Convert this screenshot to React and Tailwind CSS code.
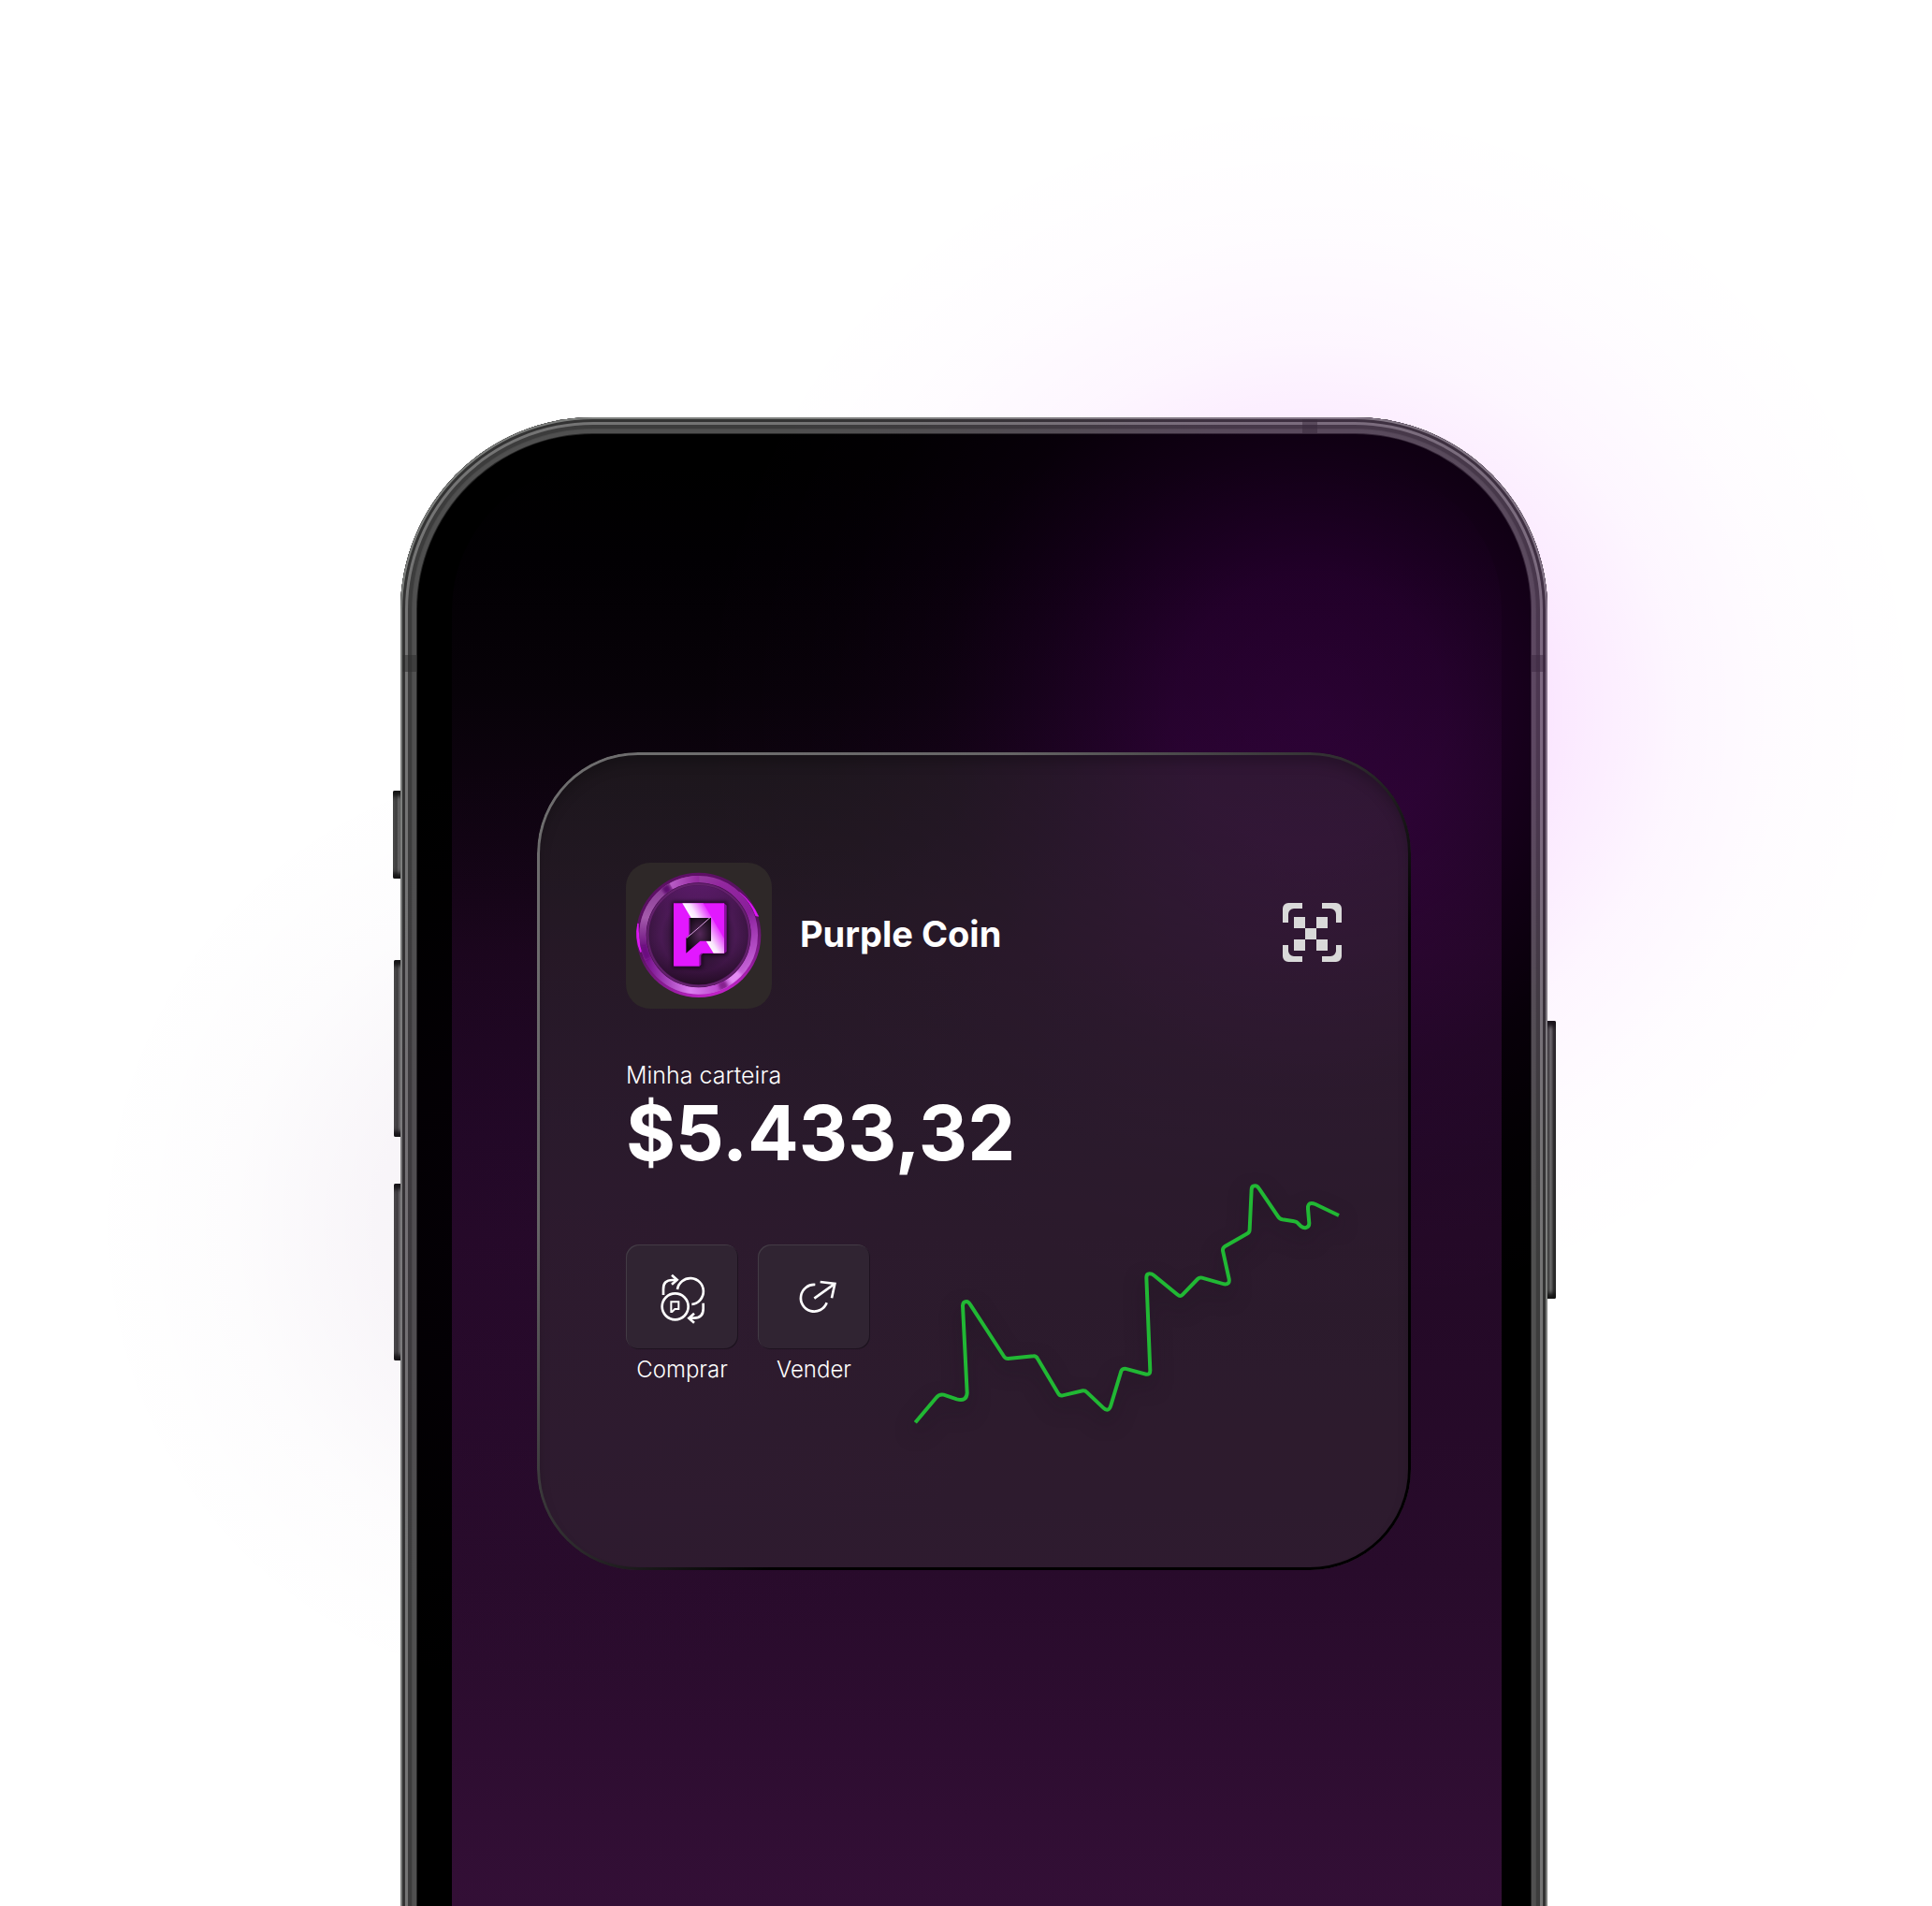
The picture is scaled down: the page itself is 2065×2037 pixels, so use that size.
import React from "react";

const FRAME_RINGS =
  "shadow-[inset_0_0_0_2px_#7d7f7d,inset_0_0_0_5px_#333333,inset_0_0_0_8px_#747474,inset_0_0_0_12px_#3c3c3c,inset_0_0_0_13px_#4a4a4a,inset_0_0_0_17px_#505050,inset_0_0_0_18px_#262626]";

function SideButton({ className }) {
  return (
    <div
      className={`absolute rounded-xs bg-[linear-gradient(90deg,#5a5a5a,#3c3c3c_30%,#6a6a6a_55%,#2e2e2e_80%)] shadow-[inset_0_8px_4px_-2px_#161616,inset_0_-8px_4px_-2px_#161616] ${className}`}
    />
  );
}

function CoinLogo() {
  return (
    <svg viewBox="27 33 468 468" className="size-39 shrink-0 rounded-[26px] bg-[#2e2828]" role="img" aria-label="Purple Coin">
      <defs>
        <linearGradient id="rim" x1="0.35" y1="0" x2="0.65" y2="1">
          <stop offset="0" stopColor="#5e0f66" />
          <stop offset="0.5" stopColor="#55125c" />
          <stop offset="0.8" stopColor="#8a1b94" />
          <stop offset="1" stopColor="#c822cf" />
        </linearGradient>
        <linearGradient id="ring" x1="0.2" y1="0" x2="0.8" y2="1">
          <stop offset="0" stopColor="#9650a0" />
          <stop offset="0.25" stopColor="#93289f" />
          <stop offset="0.55" stopColor="#8a1f9b" />
          <stop offset="0.8" stopColor="#b24cc4" />
          <stop offset="1" stopColor="#d274e4" />
        </linearGradient>
        <linearGradient id="leftSheen" x1="0" y1="0" x2="0" y2="1">
          <stop offset="0" stopColor="#8a3c96" />
          <stop offset="0.5" stopColor="#a35aab" />
          <stop offset="1" stopColor="#6c0f80" />
        </linearGradient>
        <linearGradient id="lowSheen" x1="0" y1="0" x2="1" y2="0">
          <stop offset="0" stopColor="#7a1590" />
          <stop offset="0.55" stopColor="#dc7df0" />
          <stop offset="1" stopColor="#b43fc6" />
        </linearGradient>
        <linearGradient id="topSheen" x1="0" y1="0" x2="1" y2="0">
          <stop offset="0" stopColor="#b85cc6" />
          <stop offset="1" stopColor="#94289f" />
        </linearGradient>
        <radialGradient id="face">
          <stop offset="0" stopColor="#47244a" />
          <stop offset="0.5" stopColor="#35163c" />
          <stop offset="0.75" stopColor="#4a1a54" />
          <stop offset="1" stopColor="#3b1542" />
        </radialGradient>
        <linearGradient id="faceShade" x1="0" y1="0" x2="0" y2="1">
          <stop offset="0" stopColor="#6d1d80" stopOpacity="0.6" />
          <stop offset="0.5" stopColor="#3a1540" stopOpacity="0" />
          <stop offset="1" stopColor="#12040f" stopOpacity="0.55" />
        </linearGradient>
        <linearGradient id="letter" gradientUnits="userSpaceOnUse" x1="209" y1="175" x2="290" y2="127">
          <stop offset="0" stopColor="#ffffff" />
          <stop offset="0.25" stopColor="#fbe3ff" />
          <stop offset="0.75" stopColor="#e218ff" />
          <stop offset="1" stopColor="#e218ff" />
        </linearGradient>
        <linearGradient id="letterLow" gradientUnits="userSpaceOnUse" x1="292" y1="310" x2="352" y2="274">
          <stop offset="0" stopColor="#ffffff" />
          <stop offset="0.3" stopColor="#f8e6fb" />
          <stop offset="1" stopColor="#e218ff" />
        </linearGradient>
        <radialGradient id="hole" cx="0.55" cy="0.45" r="0.6">
          <stop offset="0" stopColor="#55285a" />
          <stop offset="1" stopColor="#0d060e" />
        </radialGradient>
        <filter id="soft" x="-30%" y="-30%" width="160%" height="160%">
          <feGaussianBlur stdDeviation="7" />
        </filter>
        <filter id="smooth" x="-60%" y="-60%" width="220%" height="220%">
          <feGaussianBlur stdDeviation="5" />
        </filter>
        <clipPath id="ringBand">
          <path clipRule="evenodd" d="M70 265A190 190 0 0 1 450 265A190 190 0 0 1 70 265ZM92 265A168 168 0 0 0 428 265A168 168 0 0 0 92 265Z" />
        </clipPath>
      </defs>
      <circle cx="260" cy="265" r="200" fill="url(#rim)" />
      <path d="M392 128Q432 160 452 205L443 203Q428 160 392 128Z" fill="#e215fb" stroke="#e215fb" strokeWidth="2" />
      <path d="M66 228Q56 275 74 318L80 316Q64 275 66 228Z" fill="#dd18f2" stroke="#dd18f2" strokeWidth="4" />
      <circle cx="260" cy="265" r="179" fill="none" stroke="url(#ring)" strokeWidth="22" />
      <g clipPath="url(#ringBand)" fill="none" strokeWidth="26">
        <path d="M168 111A179 179 0 0 0 86 307" stroke="url(#leftSheen)" />
        <path d="M172 109A179 179 0 0 1 262 86" stroke="url(#topSheen)" />
        <path d="M98 342A179 179 0 0 0 345 423" stroke="url(#lowSheen)" />
        <g filter="url(#smooth)">
          <path d="M148 125A179 179 0 0 1 168 112" stroke="#5f1070" />
          <path d="M84 300A179 179 0 0 0 98 342" stroke="#6b107f" />
          <path d="M326 431A179 179 0 0 0 350 420" stroke="#86208f" />
          <path d="M360 413A179 179 0 0 0 392 386" stroke="#e58cf5" />
        </g>
      </g>
      <circle cx="260" cy="265" r="168" fill="#4d1456" />
      <circle cx="260" cy="265" r="159" fill="url(#face)" />
      <circle cx="260" cy="265" r="159" fill="url(#faceShade)" />
      <circle cx="260" cy="265" r="163" fill="none" stroke="#6d2878" strokeWidth="6" opacity="0.7" />
      <path d="M176 158H352V328H272V370H176Z" fill="#0c030e" opacity="0.75" filter="url(#soft)" />
      <path d="M342 163L350 170V318L342 324H274L268 330V360L262 366H180Z" fill="#8d10a2" />
      <path d="M180 163H342V323H268L262 330V364H180Z" fill="#e218ff" />
      <path d="M208 163H275L303 210H236Z" fill="url(#letter)" />
      <path d="M284 284H300V210H303L342 276V323H308Z" fill="url(#letterLow)" />
      <path d="M230 210H300V284H265L220 323V275L230 266Z" fill="url(#hole)" />
      <path d="M231 211V264L220 274" fill="none" stroke="#7d1590" strokeWidth="3" />
      <path d="M222 274L262 240L299 207" fill="none" stroke="#d9a0e0" strokeWidth="3" />
    </svg>
  );
}

function ScanIcon() {
  return (
    <svg viewBox="0 0 21 21" className="size-[63px]" fill="#d9d9d9" aria-hidden="true">
      <path d="M7 0H2A2 2 0 0 0 0 2V7H2V4A2 2 0 0 1 4 2H7Z" />
      <path d="M14 0H19A2 2 0 0 1 21 2V7H19V4A2 2 0 0 0 17 2H14Z" />
      <path d="M7 21H2A2 2 0 0 1 0 19V15H2V17A2 2 0 0 0 4 19H7Z" />
      <path d="M14 21H19A2 2 0 0 0 21 19V15H19V17A2 2 0 0 1 17 19H14Z" />
      <path d="M4 5H8V9H4ZM12 5H16V9H12ZM8 9H12V13H8ZM4 13H8V17H4ZM12 13H16V17H12Z" />
    </svg>
  );
}

function BuyIcon() {
  return (
    <svg viewBox="146 134 180 180" className="size-15" fill="none" stroke="#fff" strokeWidth="8" aria-hidden="true">
      <circle cx="214" cy="255" r="42" />
      <path d="M221 200A42 42 0 1 1 267 248" />
      <path d="M176 218V200Q175 170 205 170H217" />
      <path d="M203 154L220 169L203 184" />
      <path d="M304 244V262Q304 291 275 292H260" />
      <path d="M275 277L258 292L275 307" />
      <path d="M201 240H225V263H213L204 272H201Z" strokeWidth="6" />
    </svg>
  );
}

function SellIcon() {
  return (
    <svg viewBox="587 152 144 144" className="size-12" fill="none" stroke="#fff" strokeWidth="8" aria-hidden="true">
      <path d="M663 185A43 43 0 1 0 700 243" />
      <path d="M660 229L724 183" />
      <path d="M679 176L726 182L716 228" />
    </svg>
  );
}

function Action({ label, children }) {
  return (
    <button type="button" className="flex w-30 cursor-pointer flex-col items-center gap-1">
      <span className="flex h-28 w-full items-center justify-center rounded-[14px] bg-[#302432] shadow-[inset_1px_1px_0_#433b45,inset_-1px_-1px_0_#1d121f]">
        {children}
      </span>
      <span className="text-[24px] leading-9 font-light text-white">{label}</span>
    </button>
  );
}

function PriceChart() {
  return (
    <svg
      viewBox="51 69 1371 771"
      className="w-[457px] drop-shadow-[0_10px_10px_rgba(20,8,22,0.5)]"
      fill="none"
      stroke="#21b834"
      strokeWidth="12"
      aria-hidden="true"
    >
      <path d="M55 835L122 755Q132 743 146 746L188 760Q220 768 221 740L207 460Q208 447 219 447Q226 447 232 458L340 624Q344 630 352 630L434 622Q442 621 447 630L513 741Q518 750 527 748L592 733Q600 732 605 738L658 788Q664 794 670 794Q678 794 682 780L715 670Q718 662 728 662L795 680Q808 682 808 668L796 370Q796 358 806 358Q814 358 820 363L896 425Q904 433 912 425L960 375Q966 369 974 371L1045 391Q1064 393 1061 375L1041 284Q1040 275 1048 270L1120 229Q1127 225 1127 216L1133 88Q1133 76 1144 76Q1152 76 1158 86L1218 174Q1222 182 1232 184L1270 190Q1278 191 1282 196L1292 206Q1300 212 1308 210Q1318 208 1318 196L1314 150Q1313 132 1325 132Q1331 132 1338 135L1413 171" />
    </svg>
  );
}

function WalletCard() {
  return (
    <section className="relative z-10 mx-auto w-full max-w-[934px] rounded-[108px] bg-[rgba(56,56,54,0.37)] pt-[118px] pr-[74px] pb-[156px] pl-[95px] shadow-[inset_0_10px_14px_rgba(0,0,0,0.22)]">
      <div className="pointer-events-none absolute inset-0 rounded-[108px] bg-[linear-gradient(135deg,#6e6d6e_10%,#666566_28%,#2a282a_50%,#000000_62%)] mask-exclude p-[3px] [mask-clip:content-box,border-box] [mask-image:linear-gradient(#000_0_0),linear-gradient(#000_0_0)]" />
      <header className="flex items-center">
        <CoinLogo />
        <h1 className="ml-[30px] pb-1 text-[38px] leading-12 font-bold text-white">Purple Coin</h1>
        <button type="button" aria-label="Scan" className="ml-auto cursor-pointer pb-2">
          <ScanIcon />
        </button>
      </header>
      <div className="mt-[55px]">
        <p className="text-[25px] leading-8 font-light text-white">Minha carteira</p>
        <p className="text-[81px] leading-[92px] font-bold text-white">$5.433,32</p>
      </div>
      <div className="mt-2 flex items-start justify-between">
        <div className="flex gap-[21px] pt-[65px]">
          <Action label="Comprar">
            <BuyIcon />
          </Action>
          <Action label="Vender">
            <SellIcon />
          </Action>
        </div>
        <PriceChart />
      </div>
    </section>
  );
}

export default function App() {
  return (
    <main className="relative flex min-h-screen justify-center overflow-hidden bg-white pt-[446px] pl-[17px] font-['Inter',sans-serif]">
      <div className="relative w-full max-w-[1226px]">
        <SideButton className="top-[399px] -left-2 h-[94px] w-3" />
        <SideButton className="top-[580px] -left-[7px] h-[189px] w-3" />
        <SideButton className="top-[819px] -left-[7px] h-[189px] w-3" />
        <SideButton className="top-[645px] -right-[9px] h-[297px] w-3" />

        <div className="h-full rounded-t-[206px] bg-black pt-[52px] pr-[49px] pl-[55px]">
          <div className="h-full min-h-[1400px] rounded-t-[154px] bg-[linear-gradient(180deg,#000000_0px,#020003_100px,#070208_240px,#110413_400px,#1a061c_520px,#200824_720px,#230926_820px,#280b2b_1180px,#330f36_1540px)] pt-[306px] pr-[97px] pl-[91px]">
            <WalletCard />
          </div>
        </div>

        <div className={`pointer-events-none absolute inset-x-0 top-0 -bottom-8 rounded-t-[206px] ${FRAME_RINGS}`} />
        <div className="absolute top-[254px] left-[2px] h-[18px] w-4 bg-[#2b2b2b]/50" />
        <div className="absolute top-[254px] right-[2px] h-[18px] w-4 bg-[#2b2b2b]/50" />
        <div className="absolute top-[2px] right-[246px] h-4 w-4 bg-[#2b2b2b]/50" />

        <div className="pointer-events-none absolute -top-[346px] -right-[406px] size-[1320px] bg-[radial-gradient(closest-side,rgba(210,0,255,0.17),rgba(210,0,255,0.15)_22%,rgba(210,0,255,0.08)_44%,rgba(210,0,255,0.035)_60%,rgba(210,0,255,0.01)_78%,rgba(210,0,255,0)_100%)]" />
        <div className="pointer-events-none absolute top-[344px] -left-[338px] size-[1040px] bg-[radial-gradient(closest-side,rgba(80,0,100,0.06),rgba(80,0,100,0.04)_40%,rgba(80,0,100,0.013)_70%,rgba(80,0,100,0)_100%)]" />
      </div>
    </main>
  );
}
